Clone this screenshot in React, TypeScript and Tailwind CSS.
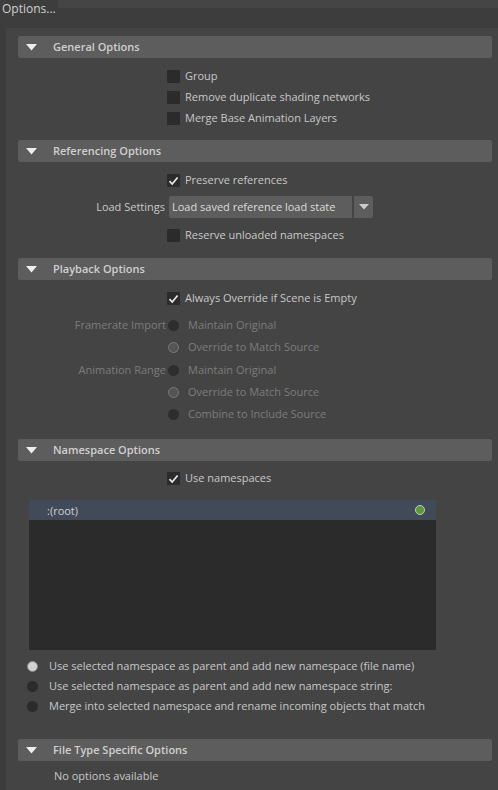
import React from "react";

const font = { fontFamily: '"Open Sans", "Liberation Sans", sans-serif' };

function Header({ title }: { title: string }) {
    return (
        <div className="h-[22px] bg-[#5d5d5d] rounded-[2px] flex items-center">
            <svg width="11" height="7" viewBox="0 0 11 7" className="ml-[8px]">
                <polygon points="0,0 11,0 5.5,6.5" fill="#eeeeee" />
            </svg>
            <span className="ml-[16px] text-[11px] font-semibold text-[#d0d0d0]">{title}</span>
        </div>
    );
}

function Check({ checked }: { checked?: boolean }) {
    return (
        <div className="w-[13px] h-[13px] bg-[#2b2b2b] rounded-[1px] flex items-center justify-center shrink-0">
            {checked && (
                <svg width="11" height="10" viewBox="0 0 11 10">
                    <path d="M1.5 5.2 L4.2 8 L9.6 1.5" stroke="#e6e6e6" strokeWidth="1.8" fill="none" />
                </svg>
            )}
        </div>
    );
}

function CheckRow({ label, checked }: { label: string; checked?: boolean }) {
    return (
        <div className="h-[21px] flex items-center pl-[149px]">
            <Check checked={checked} />
            <span className="ml-[5px] text-[11px] text-[#c8c8c8]">{label}</span>
        </div>
    );
}

function Radio({ on, disabled }: { on?: boolean; disabled?: boolean }) {
    if (disabled) {
        return (
            <div
                className={
                    on
                        ? "w-[11px] h-[11px] rounded-full bg-[#555555] border border-[#7a7a7a] shrink-0"
                        : "w-[11px] h-[11px] rounded-full bg-[#2e2e2e] shrink-0"
                }
            />
        );
    }
    return (
        <div
            className={
                on
                    ? "w-[11px] h-[11px] rounded-full bg-[#d2d2d2] border border-[#8a8a8a] shrink-0"
                    : "w-[11px] h-[11px] rounded-full bg-[#2b2b2b] shrink-0"
            }
        />
    );
}

function RadioRow({ label, text, on }: { label?: string; text: string; on?: boolean }) {
    return (
        <div className="h-[22px] flex items-center">
            <div className="w-[150px] pr-[2px] text-right text-[11px] text-[#7c7c7c]">{label}</div>
            <Radio on={on} disabled />
            <span className="ml-[9px] text-[11px] text-[#7c7c7c]">{text}</span>
        </div>
    );
}

export default function App() {
    return (
        <div className="w-[498px] h-[790px] bg-[#3d3d3d] overflow-hidden select-none" style={font}>
            {/* title strip */}
            <div className="flex items-start">
                <div className="h-[16px] leading-[17px] px-[2px] text-[12px] text-[#d0d0d0] bg-[#3d3d3d]">Options...</div>
                <div className="flex-1 h-[8px] bg-[#454545]" />
            </div>
            <div className="h-[12px]" />

            {/* panel */}
            <div className="ml-[6px] h-[762px] bg-[#444444] pt-[8px] pl-[12px] pr-[6px]">
                <Header title="General Options" />
                <div className="pt-[8px] pb-[11px]">
                    <CheckRow label="Group" />
                    <CheckRow label="Remove duplicate shading networks" />
                    <CheckRow label="Merge Base Animation Layers" />
                </div>

                <Header title="Referencing Options" />
                <div className="pt-[8px] pb-[12px]">
                    <CheckRow label="Preserve references" checked />
                    <div className="h-[22px] flex items-center mt-[5px] mb-[7px]">
                        <div className="w-[147px] text-right text-[11px] text-[#c8c8c8]">Load Settings</div>
                        <div className="ml-[4px] w-[183px] h-[22px] bg-[#5d5d5d] rounded-l-[2px] flex items-center pl-[3px] text-[11px] text-[#dcdcdc]">
                            Load saved reference load state
                        </div>
                        <div className="ml-[2px] w-[19px] h-[22px] bg-[#5d5d5d] rounded-r-[2px] flex items-center justify-center">
                            <svg width="10" height="6" viewBox="0 0 10 6">
                                <polygon points="0,0 10,0 5,5.5" fill="#cccccc" />
                            </svg>
                        </div>
                    </div>
                    <CheckRow label="Reserve unloaded namespaces" />
                </div>

                <Header title="Playback Options" />
                <div className="pt-[8px] pb-[14px]">
                    <CheckRow label="Always Override if Scene is Empty" checked />
                    <div className="mt-[5px]">
                        <RadioRow label="Framerate Import" text="Maintain Original" />
                        <RadioRow text="Override to Match Source" on />
                        <div className="h-[1px]" />
                        <RadioRow label="Animation Range" text="Maintain Original" />
                        <RadioRow text="Override to Match Source" on />
                        <RadioRow text="Combine to Include Source" />
                    </div>
                </div>

                <Header title="Namespace Options" />
                <div className="pt-[7px]">
                    <CheckRow label="Use namespaces" checked />
                    <div className="ml-[11px] mt-[11px] w-[407px] h-[150px] bg-[#2b2b2b]">
                        <div className="h-[20px] bg-[#404a58] flex items-center justify-between pl-[18px] pr-[11px]">
                            <span className="text-[11px] text-[#d0d0d0] pt-[2px]">:(root)</span>
                            <div className="w-[10px] h-[10px] rounded-full bg-[#5b9a33] border border-[#c8c8c8]" />
                        </div>
                    </div>
                    <div className="mt-[6px] pl-[9px]">
                        {[
                            "Use selected namespace as parent and add new namespace (file name)",
                            "Use selected namespace as parent and add new namespace string:",
                            "Merge into selected namespace and rename incoming objects that match",
                        ].map((t, i) => (
                            <div key={t} className="h-[20px] flex items-center">
                                <Radio on={i === 0} />
                                <span className="ml-[11px] text-[11px] text-[#c8c8c8]">{t}</span>
                            </div>
                        ))}
                    </div>
                </div>

                <div className="mt-[23px]">
                    <Header title="File Type Specific Options" />
                </div>
                <div className="pl-[36px] h-[30px] flex items-center text-[11px] text-[#c8c8c8]">No options available</div>
            </div>
        </div>
    );
}
